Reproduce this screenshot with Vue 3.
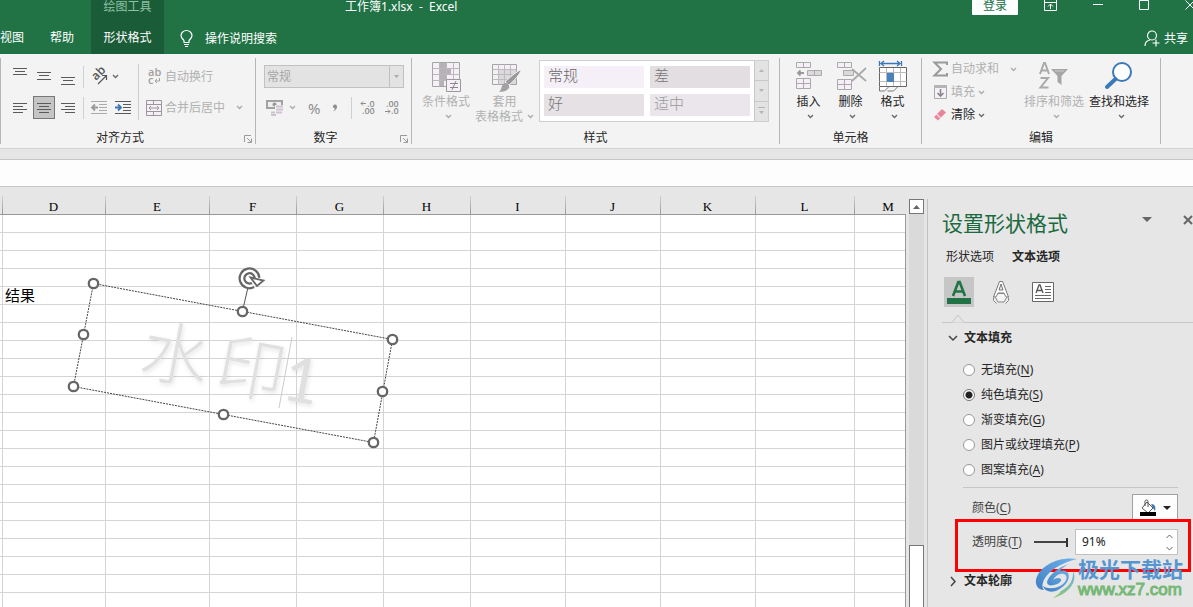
<script setup>
import { ref } from 'vue'

const columns = [
  { name: '', width: 3 },
  { name: 'D', width: 103 },
  { name: 'E', width: 104 },
  { name: 'F', width: 87 },
  { name: 'G', width: 87 },
  { name: 'H', width: 87 },
  { name: 'I', width: 95 },
  { name: 'J', width: 95 },
  { name: 'K', width: 95 },
  { name: 'L', width: 99 },
  { name: 'M', width: 0 }
]
const rowCount = 22
const cells = { '5-D': '结果' }

const fills = [
  { id: 'none', text: '无填充', key: 'N' },
  { id: 'solid', text: '纯色填充', key: 'S' },
  { id: 'gradient', text: '渐变填充', key: 'G' },
  { id: 'picture', text: '图片或纹理填充', key: 'P' },
  { id: 'pattern', text: '图案填充', key: 'A' }
]
const fill = ref('solid')
const transparency = ref('91%')
const level = ref(91)
const handles = [
  [93, 283], [242, 311], [392, 339], [382, 391], [373, 442], [223, 414], [73, 386], [83, 334]
]
</script>

<template>
  <div class="app">
    <header class="topbar">
      <nav class="tabs">
        <a href="#" class="tab view">视图</a>
        <a href="#" class="tab help">帮助</a>
        <div class="context">
          <span class="context-name">绘图工具</span>
          <a href="#" class="tab">形状格式</a>
        </div>
      </nav>
      <div class="top-main">
        <div class="title-row">
          <span class="doc">工作簿1.xlsx&nbsp; -&nbsp; Excel</span>
          <button class="login">登录</button>
          <button class="win" aria-label="功能区显示选项">
            <svg width="13" height="12" viewBox="0 0 13 12"><path d="M.5 0v10.500h12V0M0 2.500h13M6.500 9V4M4 6.500L6.500 4 9 6.500" fill="none" stroke="#fff" /></svg>
          </button>
          <button class="win" aria-label="最小化">
            <svg width="10" height="12" viewBox="0 0 10 12"><path d="M0 4.500h10" stroke="#fff" /></svg>
          </button>
          <button class="win" aria-label="最大化">
            <svg width="10" height="12" viewBox="0 0 10 12"><path d="M.5 .5h9v9h-9z" fill="none" stroke="#fff" /></svg>
          </button>
          <button class="win last" aria-label="关闭">
            <svg width="10" height="12" viewBox="0 0 10 12"><path d="M.5 .5l9 9M9.500 .5l-9 9" stroke="#fff" /></svg>
          </button>
        </div>
        <div class="search-row">
          <button class="search">
            <svg width="13" height="17" viewBox="0 0 13 17"><path d="M4 12.500v-2C3 9 1 8 1 5.500a5.500 5 0 0 1 11 0C12 8 10 9 9 10.500v2zM4 14.500h5M5 16.500h3" fill="none" stroke="#fff" stroke-width="1.200" /></svg>
            <span>操作说明搜索</span>
          </button>
          <button class="share">
            <svg width="16" height="17" viewBox="0 0 16 17"><circle cx="8" cy="5.500" r="4.500" fill="none" stroke="#fff" stroke-width="1.200" /><path d="M1 16c0-3.500 2-5.500 5-6M12 9.500v7M8.500 13h7" fill="none" stroke="#fff" stroke-width="1.200" /></svg>
            <span>共享</span>
          </button>
        </div>
      </div>
    </header>

    <svg class="defs" width="0" height="0" aria-hidden="true">
      <symbol id="chev" viewBox="0 0 7 5"><path d="M1 1l2.500 2.500L6 1" fill="none" stroke="currentColor" stroke-width="1.300" /></symbol>
      <symbol id="launch" viewBox="0 0 8 8"><path d="M.5 7V.5H7M3 3l4 4M7.500 3.500v4h-4" fill="none" stroke="#999" /></symbol>
    </svg>

    <section class="ribbon">
      <div class="group align">
        <div class="body">
          <div class="stack">
            <div class="line">
              <button class="sq" aria-label="顶端对齐"><svg width="14" height="20" viewBox="0 0 14 20"><path d="M0 1.500h14M2 4.500h10M0 7.500h14" stroke="#5a5a5a" /></svg></button>
              <button class="sq" aria-label="垂直居中"><svg width="14" height="20" viewBox="0 0 14 20"><path d="M0 5.500h14M2 8.500h10M0 12.500h14" stroke="#5a5a5a" /></svg></button>
              <button class="sq" aria-label="底端对齐"><svg width="14" height="20" viewBox="0 0 14 20"><path d="M0 10.500h14M2 13.500h10M0 17.500h14" stroke="#5a5a5a" /></svg></button>
              <i class="sep"></i>
              <button class="orient" aria-label="方向">
                <svg width="18" height="17" viewBox="0 0 18 17"><text x="0" y="0" transform="translate(5 13) rotate(-45)" font-family="Open Sans, sans-serif" font-size="12" font-weight="600" fill="#555">ab</text><path d="M7 16l8.500-8.500M11 7.500h4.500V12" fill="none" stroke="#555" stroke-width="1.200" /></svg>
                <svg class="chev"><use href="#chev" /></svg>
              </button>
            </div>
            <div class="line">
              <button class="sq" aria-label="左对齐"><svg width="14" height="12" viewBox="0 0 14 12"><path d="M0 1.500h14M0 4.500h10M0 7.500h14M0 10.500h10" stroke="#5a5a5a" /></svg></button>
              <button class="sq on" aria-label="居中"><svg width="14" height="12" viewBox="0 0 14 12"><path d="M0 1.500h14M2 4.500h10M0 7.500h14M2 10.500h10" stroke="#5a5a5a" /></svg></button>
              <button class="sq" aria-label="右对齐"><svg width="14" height="12" viewBox="0 0 14 12"><path d="M0 1.500h14M4 4.500h10M0 7.500h14M4 10.500h10" stroke="#5a5a5a" /></svg></button>
              <i class="sep"></i>
              <button class="indent" aria-label="减少缩进"><svg width="16" height="13" viewBox="0 0 16 13"><path d="M0 .5h16M8 3.500h8M8 6.500h8M8 9.500h8M0 12.500h16" stroke="#aaa" /><path d="M7 6.500H1M4 3.500l-3 3 3 3" fill="none" stroke="#9a9a9a" stroke-width="1.800" /></svg></button>
              <button class="indent" aria-label="增加缩进"><svg width="16" height="13" viewBox="0 0 16 13"><path d="M0 .5h16M8 3.500h8M8 6.500h8M8 9.500h8M0 12.500h16" stroke="#5a5a5a" /><path d="M0 6.500h6M3 3.500l3 3-3 3" fill="none" stroke="#3a78b5" stroke-width="1.800" /></svg></button>
            </div>
          </div>
          <i class="sep tall"></i>
          <div class="stack">
            <button class="line item off">
              <svg width="16" height="17" viewBox="0 0 16 17"><text x="2" y="8" font-family="Open Sans, sans-serif" font-size="11" font-weight="600" fill="#a0a0a0">ab</text><text x="2" y="16" font-family="Open Sans, sans-serif" font-size="11" font-weight="600" fill="#a0a0a0">c</text><path d="M13.500 10v3H9.500M11 11l-2 2 2 2" fill="none" stroke="#a0a0a0" /></svg>
              <span>自动换行</span>
            </button>
            <button class="line item off">
              <svg width="16" height="16" viewBox="0 0 16 16"><path d="M.5 .5h15v15H.5z" fill="#f6eff8" stroke="#999" /><path d="M.5 4.500h15M.5 11.500h15M7.500 1v3M7.500 12v3" stroke="#999" /><path d="M3 8h10M5 6L3 8l2 2M11 6l2 2-2 2" fill="none" stroke="#999" /></svg>
              <span>合并后居中</span>
              <svg class="chev push"><use href="#chev" /></svg>
            </button>
          </div>
        </div>
        <footer><span>对齐方式</span><svg class="launch"><use href="#launch" /></svg></footer>
      </div>

      <div class="group number">
        <div class="body">
          <div class="stack full">
            <div class="select">
              <select aria-label="数字格式"><option>常规</option></select>
              <svg width="7" height="4" viewBox="0 0 7 4"><path d="M1 0h5L3.500 3z" fill="#aaa" /></svg>
            </div>
            <div class="line off nums">
              <button class="money" aria-label="会计数字格式">
                <svg width="18" height="17" viewBox="0 0 18 17"><path d="M1 2h15v7H1z" fill="#f3eef5" stroke="#a2a2a2" stroke-width="2" /><circle cx="8.500" cy="5.500" r="2" fill="#999" /><path d="M9 6h9v10H9z" fill="#f3f3f3" /><path d="M10 7.500h7M10 10.500h7M10 13.500h6M5 13.500h4M5 16h5" stroke="#cbc4cd" stroke-width="2" /></svg>
                <svg class="chev"><use href="#chev" /></svg>
              </button>
              <button class="pct">%</button>
              <button class="comma" aria-label="千位分隔样式"><svg width="6" height="8" viewBox="0 0 6 8"><path d="M1 2a2 2 0 1 1 4 1C5 5 3 7 1 7.500 2.500 6 3 5 3 4.500 1.500 4.500 1 3.500 1 2z" fill="#8e8e8e" /></svg></button>
              <i class="sep"></i>
              <button class="dec" aria-label="增加小数位数"><svg width="16" height="15" viewBox="0 0 16 15"><g font-family="Open Sans, sans-serif" font-size="9" font-weight="600" fill="#8e8e8e"><text x="7" y="7">.0</text><text x="2" y="14">.00</text></g><path d="M6 3.500H1M3 1.500l-2 2 2 2" fill="none" stroke="#8e8e8e" /></svg></button>
              <button class="dec" aria-label="减少小数位数"><svg width="16" height="15" viewBox="0 0 16 15"><g font-family="Open Sans, sans-serif" font-size="9" font-weight="600" fill="#8e8e8e"><text x="2" y="7">.00</text><text x="7" y="14">.0</text></g><path d="M1 11.500h5M4 9.500l2 2-2 2" fill="none" stroke="#8e8e8e" /></svg></button>
            </div>
          </div>
        </div>
        <footer><span>数字</span><svg class="launch"><use href="#launch" /></svg></footer>
      </div>

      <div class="group styles">
        <div class="body">
          <button class="big off">
            <svg width="32" height="32" viewBox="0 0 32 32"><path d="M2.500 .5h27v24h-27z" fill="#f6eff8" stroke="#a5a5a5" /><path d="M10 1h6v5h5v6h-5v6h-2v6h-4z" fill="#b4b2b5" /><path d="M2.500 6.500h27M2.500 12.500h27M2.500 18.500h27M9.500 .5v24M16.500 .5v24M23.500 .5v24" stroke="#b9b9b9" fill="none" /><path d="M16.500 17.500h14v12h-14z" fill="#f6eff8" stroke="#999" /><path d="M20 21.500h8M20 25.500h8M26 19l-4 9" stroke="#888" fill="none" /></svg>
            <span>条件格式</span>
            <svg class="chev"><use href="#chev" /></svg>
          </button>
          <button class="big off tbl">
            <svg width="32" height="32" viewBox="0 0 32 32"><path d="M3.500 2.500h24v20h-24z" fill="#f6eff8" stroke="#a5a5a5" /><path d="M10 8h17v14H10z" fill="#dcd8de" /><path d="M3.500 7.500h24M3.500 12.500h24M3.500 17.500h24M9.500 2.500v20M15.500 2.500v20M21.500 2.500v20" stroke="#bcbcbc" fill="none" /><path d="M32 8c0 3-8 12-12 15l-4-3C20 16 28 9 32 8z" fill="#999" stroke="#f3f3f3" /><path d="M16 21c3 0 5 2 4 5-2 3-6 4-10 4 3-2 2-8 6-9z" fill="#a2a2a2" /></svg>
            <span>套用</span>
            <span>表格格式 <svg class="chev"><use href="#chev" /></svg></span>
          </button>
          <div class="gallery">
            <div class="swatches">
              <button class="s1">常规</button>
              <button class="s2">差</button>
              <button class="s3">好</button>
              <button class="s4">适中</button>
            </div>
            <div class="scroller">
              <button aria-label="上一行"><svg width="7" height="4" viewBox="0 0 7 4"><path d="M1 3h5L3.500 0z" fill="#b5b5b5" /></svg></button>
              <button aria-label="下一行"><svg width="7" height="4" viewBox="0 0 7 4"><path d="M1 0h5L3.500 3z" fill="#b5b5b5" /></svg></button>
              <button aria-label="其他"><svg width="7" height="8" viewBox="0 0 7 8"><path d="M0 .5h7" stroke="#b5b5b5" /><path d="M1 4h5L3.500 7z" fill="#b5b5b5" /></svg></button>
            </div>
          </div>
        </div>
        <footer><span>样式</span></footer>
      </div>

      <div class="group cellsgrp">
        <div class="body">
          <button class="big">
            <svg width="32" height="32" viewBox="0 0 32 32"><g stroke="#aaa" fill="#f6eff8"><path d="M3.500 .5h14v5h-14zM10.500 .5v5M3.500 16.500h14v10h-14zM10.500 16.500v10M3.500 21.500h14" /><path d="M14.500 8.500h14v5h-14zM21.500 8.500v5" fill="#dcd8de" /></g><path d="M11 11H5M7.500 8.500L5 11l2.500 2.500" fill="none" stroke="#999" stroke-width="1.800" /></svg>
            <span>插入</span>
            <svg class="chev"><use href="#chev" /></svg>
          </button>
          <button class="big">
            <svg width="32" height="32" viewBox="0 0 32 32"><g stroke="#aaa" fill="#f6eff8"><path d="M2.500 .5h14v5h-14zM9.500 .5v5M2.500 17.500h14v10h-14zM9.500 17.500v10M2.500 22.500h14" /><path d="M8.500 8.500h10v5h-10z" fill="#dcd8de" /></g><path d="M17 7l14 12M31 6L17 19" fill="none" stroke="#aaa" stroke-width="1.800" /></svg>
            <span>删除</span>
            <svg class="chev"><use href="#chev" /></svg>
          </button>
          <button class="big">
            <svg width="32" height="32" viewBox="0 0 32 32"><path d="M2.500 -1v5M24.500 -1v5M4 1.500h19M7 -1L4 1.500 7 4M20 -1l3 2.500L20 4" fill="none" stroke="#3a78b5" stroke-width="1.300" /><path d="M2.500 5.500h27v19h-27z" fill="#fff" stroke="#666" /><path d="M2.500 10.500h27M2.500 19.500h27M9.500 6v18M16.500 6v18M23.500 6v18" fill="none" stroke="#bbb" /><path d="M10 11h7v9h-7z" fill="#4a82bb" /><path d="M2.500 25v4h5l4-4M10.500 29h6l4-4" fill="#fff" stroke="#777" /></svg>
            <span>格式</span>
            <svg class="chev"><use href="#chev" /></svg>
          </button>
        </div>
        <footer><span>单元格</span></footer>
      </div>

      <div class="group edit">
        <div class="body">
          <div class="edits">
            <button class="item off"><svg width="15" height="16" viewBox="0 0 15 16"><path d="M14 4V1.500H1.500L8 8l-6.500 6.500H14V12" fill="none" stroke="#999" stroke-width="2" /></svg><span>自动求和</span><svg class="chev push"><use href="#chev" /></svg></button>
            <button class="item off"><svg width="15" height="16" viewBox="0 0 15 16"><path d="M1.500 1.500h12v13h-12z" fill="#f6eff8" stroke="#aaa" /><path d="M1 1h13v3H1z" fill="#b5b5b5" /><path d="M7.500 5v7M4.500 9l3 3 3-3" fill="none" stroke="#888" stroke-width="1.600" /></svg><span>填充</span><svg class="chev"><use href="#chev" /></svg></button>
            <button class="item"><svg width="15" height="16" viewBox="0 0 15 16"><path d="M9 2l4 3.500-8 8L1 10z" fill="#e8849a" /><path d="M3.500 7l4 4" stroke="#f7d5dc" stroke-width="1.500" /></svg><span>清除</span><svg class="chev"><use href="#chev" /></svg></button>
          </div>
          <button class="big off sort">
            <svg width="32" height="32" viewBox="0 0 32 32"><path d="M2 12L6 1h1l4 11M3.500 8.500h6" fill="none" stroke="#aaa" stroke-width="2" /><path d="M2.500 16h7.500L2.500 25.500h8" fill="none" stroke="#aaa" stroke-width="2" /><path d="M13 7h17l-6.500 7v9l-4-3v-6z" fill="#a5a5a5" /><path d="M17 9h9" stroke="#ccc" /></svg>
            <span>排序和筛选</span>
            <svg class="chev"><use href="#chev" /></svg>
          </button>
          <button class="big find">
            <svg width="32" height="32" viewBox="0 0 32 32"><circle cx="19" cy="10" r="9" fill="#fff" stroke="#3a7ab8" stroke-width="2" /><path d="M12.500 17L4 25" stroke="#3a7ab8" stroke-width="4" stroke-linecap="round" /></svg>
            <span>查找和选择</span>
            <svg class="chev"><use href="#chev" /></svg>
          </button>
        </div>
        <footer><span>编辑</span></footer>
      </div>
    </section>

    <div class="formula"><input type="text" aria-label="编辑栏"></div>

    <main class="work">
      <div class="sheet">
        <table>
          <colgroup>
            <col v-for="c in columns" :key="c.name" :style="c.width ? { width: c.width + 'px' } : {}">
          </colgroup>
          <thead>
            <tr><th v-for="c in columns" :key="c.name">{{ c.name }}</th></tr>
          </thead>
          <tbody>
            <tr v-for="r in rowCount" :key="r">
              <td v-for="c in columns" :key="c.name">{{ cells[r + '-' + c.name] }}</td>
            </tr>
          </tbody>
        </table>
        <svg class="shape" width="350" height="200" viewBox="60 260 350 200">
          <defs><filter id="soft" x="-20%" y="-20%" width="140%" height="140%"><feDropShadow dx="1" dy="2" stdDeviation="2" flood-color="#000" flood-opacity=".1" /></filter></defs>
          <g font-family="Noto Sans CJK SC, sans-serif" font-size="68" font-weight="300" fill="#e0e0e0" filter="url(#soft)" text-anchor="middle">
            <text transform="translate(171 379) rotate(10.600)">水</text>
            <text transform="translate(247 393) rotate(10.600)">印</text>
            <text transform="translate(298 402) rotate(10.600)" font-family="Lato, sans-serif" font-size="62" font-weight="400">1</text>
          </g>
          <path d="M292 337l-13 71" stroke="#ccc" />
          <path d="M93.500 283.500l299 56-19 103-300-56z" fill="none" stroke="#444" stroke-dasharray="2 1" />
          <path d="M242.500 311l6-26" stroke="#555" />
          <path d="M253 285a7.500 7.500 0 1 1 4-7" fill="none" stroke="#666" stroke-width="7" />
          <path d="M253 285a7.500 7.500 0 1 1 4-7" fill="none" stroke="#fff" stroke-width="2.500" />
          <path d="M250.500 277.500l13 3-6.500 5.500z" fill="#fff" stroke="#666" stroke-width="1.800" />
          <circle v-for="(h, i) in handles" :key="i" :cx="h[0] + 0.5" :cy="h[1] + 0.5" r="4.700" fill="#fff" stroke="#666" stroke-width="2.300" />
        </svg>
      </div>
      <div class="vscroll">
        <button aria-label="向上滚动"><svg width="7" height="4" viewBox="0 0 7 4"><path d="M0 4h7L3.500 0z" fill="#666" /></svg></button>
        <div class="thumb"></div>
      </div>

      <aside class="panel">
        <div class="panel-head">
          <h1>设置形状格式</h1>
          <button aria-label="窗格选项"><svg width="10" height="6" viewBox="0 0 10 6"><path d="M0 0h10L5 5z" fill="#666" /></svg></button>
          <button aria-label="关闭窗格"><svg width="10" height="10" viewBox="0 0 10 10"><path d="M1 1l8 8M9 1L1 9" stroke="#666" stroke-width="2" /></svg></button>
        </div>
        <div class="panel-tabs">
          <button>形状选项</button>
          <button class="active">文本选项</button>
        </div>
        <div class="modes">
          <button class="on" aria-label="文本填充与轮廓"><svg width="30" height="30" viewBox="0 0 30 30"><path d="M9 19L14.300 5h1.400L21 19M11 14.500h8" fill="none" stroke="#217346" stroke-width="2.600" /><path d="M3 21h24v6H3z" fill="#217346" /></svg></button>
          <button aria-label="文字效果"><svg width="30" height="30" viewBox="0 0 30 30"><path d="M7.500 20L13.500 4.500h3L22.500 20h-3l-1.500-4h-6l-1.500 4zM13 13h4l-2-6z" fill="#fff" stroke="#777" /><path d="M7.500 20.500v3l3 3M22.500 20.500v3l-3 3M12 16.500l-2.500 4 2.500 4.500h6l2.500-4.500-2.500-4z" fill="#f4f4f4" stroke="#888" /></svg></button>
          <button aria-label="文本框"><svg width="30" height="30" viewBox="0 0 30 30"><path d="M4.500 5.500h21v19h-21z" fill="#fff" stroke="#666" /><path d="M8 16l3-8h1l3 8M9 13.500h5" fill="none" stroke="#555" stroke-width="1.300" /><path d="M17 9.500h6M17 12.500h6M17 15.500h6M7 18.500h16M7 21.500h16" stroke="#666" /></svg></button>
        </div>
        <svg class="notch" width="14" height="9" viewBox="0 0 14 9"><path d="M0 8.500h1L7 1l6 7.500h1" fill="#e6e6e6" stroke="#c6c6c6" /></svg>
        <div class="options">
          <h2><svg width="10" height="7" viewBox="0 0 10 7"><path d="M1 1l4 4 4-4" fill="none" stroke="#444" stroke-width="1.500" /></svg>文本填充</h2>
          <div class="radios">
            <label v-for="f in fills" :key="f.id">
              <input v-model="fill" type="radio" name="fill" :value="f.id">
              <span>{{ f.text }}(<u>{{ f.key }}</u>)</span>
            </label>
          </div>
          <div class="row color">
            <span>颜色(<u>C</u>)</span>
            <button class="paint" aria-label="颜色(C)">
              <svg width="20" height="18" viewBox="0 0 20 18"><path d="M8 3l6 6-5 5-6-5zM6 7V2.500a1.500 1.500 0 0 1 3 0V8" fill="#fff" stroke="#555" /><path d="M12 5c4 0 5 3 4 7-1-1-2-3-4-7z" fill="#3a78b5" /><path d="M1 13h16v4H1z" fill="#000" /></svg>
              <svg width="8" height="5" viewBox="0 0 8 5"><path d="M0 0h8L4 4z" fill="#222" /></svg>
            </button>
          </div>
          <div class="row trans">
            <label for="tr">透明度(<u>T</u>)</label>
            <input v-model="level" class="slider" type="range" min="0" max="91" aria-label="透明度滑块">
            <div class="spin">
              <input id="tr" v-model="transparency" type="text">
              <div class="steps">
                <button aria-label="增加"><svg width="7" height="5" viewBox="0 0 7 5"><path d="M.5 4l3-3 3 3" fill="none" stroke="#666" /></svg></button>
                <button aria-label="减少"><svg width="7" height="5" viewBox="0 0 7 5"><path d="M.5 1l3 3 3-3" fill="none" stroke="#666" /></svg></button>
              </div>
            </div>
            <div class="mark"></div>
          </div>
          <h2><svg width="10" height="9" viewBox="0 0 10 9"><path d="M3 0l4 4.500L3 9" fill="none" stroke="#444" stroke-width="1.500" /></svg>文本轮廓</h2>
        </div>
      </aside>
    </main>

    <div class="brand">
      <svg width="42" height="42" viewBox="0 0 42 42">
        <defs>
          <linearGradient id="bl" x1="0" y1="1" x2="1" y2="0"><stop offset="0" stop-color="#3f7fc4" /><stop offset="1" stop-color="#6fb3ea" /></linearGradient>
          <linearGradient id="gr" x1="0" y1="1" x2="1" y2="0"><stop offset="0" stop-color="#8fcb6a" /><stop offset="1" stop-color="#6fb0d8" /></linearGradient>
        </defs>
        <path d="M42 1C25-2 4 7 1 22c-1 6 3 10 8 10C3 24 16 7 42 1z" fill="url(#bl)" />
        <path d="M34 6C23 9 13 18 12 24c0 3 3 4 7 3 5-1 8-4 7-6-2-2-6-1-8 1 2-4 7-7 11-6 5 2 2 9-4 12s-13 3-17 0c2 6 9 7 15 4 8-4 13-12 10-17-2-3-5-3-8-2 2-3 5-5 9-7z" fill="url(#bl)" />
        <path d="M38 13c5 10-4 23-20 27 4-3 7-5 8-7 8-4 13-11 12-20z" fill="url(#gr)" />
      </svg>
      <div><b>极光下载站</b><span>www.xz7.com</span></div>
    </div>
  </div>
</template>

<style>
html, body, #app { height: 100%; }
body { overflow: hidden; }
</style>

<style scoped>
.app {
  position: relative;
  display: flex;
  flex-direction: column;
  height: 100%;
  overflow: hidden;
  background: #e6e6e6;
  color: #262626;
  font: 12px/14px "Noto Sans", "Noto Sans CJK SC", sans-serif;
}
.app * { box-sizing: border-box; }
button, input, select { margin: 0; padding: 0; border: 0; background: none; color: inherit; font: inherit; }
a { color: inherit; text-decoration: none; }
svg { display: block; flex: none; overflow: visible; }
.defs { position: absolute; }

.topbar { display: flex; height: 54px; flex: none; background: #217346; color: #fff; }
.tabs { display: flex; align-items: flex-end; }
.tab { display: block; height: 23px; white-space: nowrap; }
.view { width: 24px; margin-right: 26px; }
.help { margin-right: 17px; }
.context { display: flex; flex-direction: column; justify-content: space-between; align-items: center; align-self: stretch; width: 73px; background: #1b5c38; }
.context-name { color: #8fc0a2; }
.top-main { flex: 1; display: flex; flex-direction: column; justify-content: space-between; }
.title-row { display: flex; align-items: flex-start; height: 15px; margin-right: -2px; }
.doc { margin-left: 181px; margin-right: auto; white-space: nowrap; }
.login { width: 46px; height: 15px; margin-right: 26px; background: #fff; color: #217346; line-height: 11px; padding-bottom: 4px; border-radius: 0 0 1px 1px; }
.win { margin-right: 36px; }
.win.last { margin-right: 0; }
.search-row { display: flex; justify-content: space-between; padding: 0 5px 7px 16px; }
.search, .share { display: flex; align-items: center; gap: 12px; }
.share { gap: 4px; }

.ribbon { display: flex; flex: none; height: 95px; padding-top: 4px; background: #f3f3f3; border-bottom: 1px solid #d2d2d2; }
.group { display: flex; flex-direction: column; height: 86px; border-right: 1px solid #b5b5b5; }
.group .body { display: flex; height: 73px; align-items: flex-start; }
.group footer { position: relative; text-align: center; line-height: 13px; }
.align footer, .number footer { padding-right: 16px; }
.launch { position: absolute; right: 3px; bottom: 1px; width: 8px; height: 8px; }
.align { width: 256px; border-left: 1px solid #b5b5b5; }
.number { width: 156px; }
.styles { width: 368px; }
.cellsgrp { width: 142px; }
.edit { width: 239px; }
.off { color: #b1b1b1; }
.chev { width: 7px; height: 5px; color: #666; }
.off .chev { color: #aaa; }
.stack { display: flex; flex-direction: column; gap: 8px; padding-top: 7px; }
.stack.full { flex: 1; padding-left: 8px; padding-right: 7px; }
.line { display: flex; align-items: center; height: 23px; }
.align .stack:first-child { padding-left: 8px; }
.sq { display: flex; align-items: center; justify-content: center; width: 22px; height: 23px; margin-right: 2px; }
.sq.on { background: #c5c5c5; border: 1px solid #777; }
.sep { width: 1px; height: 22px; background: #d0d0d0; margin: 0 7px 0 2px; }
.sep.tall { height: 56px; margin: 6px 7px 0 7px; }
.orient { display: flex; align-items: center; gap: 3px; }
.indent { margin-right: 8px; }
.indent + .indent { margin-right: 0; }
.item { display: flex; align-items: center; gap: 3px; white-space: nowrap; }
.push { margin-left: 8px; }
.select { display: flex; align-items: center; height: 23px; background: #e3e3e3; border: 1px solid #c1c1c1; padding-right: 3px; }
.select select { flex: 1; height: 21px; margin-right: 3px; padding-left: 2px; appearance: none; color: #a6a6a6; border-right: 1px solid #c1c1c1; }
.nums .sep { margin: 0 8px 0 13px; }
.money { display: flex; align-items: center; gap: 5px; margin: 0 12px 0 2px; }
.pct { font-size: 15px; color: #8e8e8e; margin-right: 12px; }
.dec + .dec { margin-left: 8px; }

.big { display: flex; flex-direction: column; align-items: center; padding-top: 4px; white-space: nowrap; line-height: 15px; }
.big > .chev { margin: 5px 0 0 4px; }
.big span { display: flex; align-items: center; gap: 4px; }
.styles .body { padding-left: 10px; }
.tbl { margin-left: 5px; }
.gallery { display: flex; flex: 1; height: 62px; margin: 2px 10px 0 5px; border: 1px solid #cfcfcf; background: #fff; }
.swatches { flex: 1; display: grid; grid-template-columns: 1fr 1fr; grid-template-rows: 22px 22px; gap: 6px; padding: 5px 4px; }
.swatches button { text-align: left; padding: 0 0 4px 4px; font-size: 15px; font-weight: 300; line-height: 18px; }
.s1 { background: #f5f0f7; color: #666; }
.s2 { background: #e3dee2; color: #777; }
.s3 { background: #e5e1e5; color: #777; }
.s4 { background: #eae6ec; color: #999; }
.scroller { display: flex; flex-direction: column; width: 14px; background: #e3e3e3; border-left: 1px solid #c8c8c8; }
.scroller button { flex: 1; display: flex; align-items: center; justify-content: center; }
.scroller button + button { border-top: 1px solid #c8c8c8; }
.cellsgrp .body { justify-content: center; gap: 10px; }
.edit .body { padding-left: 11px; }
.edits { width: 88px; display: flex; flex-direction: column; gap: 7px; padding-top: 3px; }
.sort { margin-left: 3px; }
.find { margin-left: 5px; }

.formula { flex: none; height: 28px; margin-top: 10px; background: #fdfdfd; border: solid #c6c6c6; border-width: 1px 0; }
.formula input { width: 100%; height: 26px; }

.work { flex: 1; min-height: 0; display: flex; }
.sheet { position: relative; flex: 1; overflow: hidden; }
.sheet::after { content: ""; position: absolute; top: 27px; right: 0; bottom: 0; width: 1px; background: #999; }
table { width: calc(100% + 17px); table-layout: fixed; border-collapse: separate; border-spacing: 0; }
th { height: 28px; padding: 13px 2px 0 0; border-bottom: 1px solid #999; background: linear-gradient(#d0d0d0, #999) right bottom / 1px 18px no-repeat; font: 13px/14px "Liberation Serif", serif; color: #000; }
td { height: 18px; padding: 0 2px; border: solid #d4d4d4; border-width: 0 1px 1px 0; background: #fff; font-size: 15px; line-height: 17px; color: #000; white-space: nowrap; overflow: hidden; }
.shape { position: absolute; left: 60px; top: 73px; }

.vscroll { display: flex; flex-direction: column; justify-content: space-between; width: 15px; margin: 12px 3px 0; background: #dadada; }
.vscroll button { display: flex; align-items: center; justify-content: center; width: 15px; height: 15px; background: #fff; border: 1px solid #777; }
.thumb { height: 62px; background: #fff; border: 1px solid #777; border-bottom: 0; }

.panel { width: 266px; margin-top: 12px; border-left: 1px solid #c1c1c1; padding-left: 14px; }
.panel-head { display: flex; align-items: center; height: 42px; padding-top: 6px; }
h1 { margin: 0; flex: 1; color: #1b6a3f; font-size: 21px; line-height: 28px; font-weight: 400; white-space: nowrap; }
.panel-head button + button { margin-left: 31px; }
.panel-head button { padding-bottom: 6px; }
.panel-tabs { display: flex; gap: 18px; height: 36px; padding: 9px 0 0 4px; align-items: flex-start; }
.active { font-weight: 700; }
.modes { display: flex; gap: 12px; padding-left: 2px; }
.modes .on { background: #c6c6c6; }
.notch { position: relative; z-index: 1; margin: 7px 0 -1px 9px; }
.options { border-top: 1px solid #c6c6c6; }
h2 { display: flex; align-items: center; gap: 6px; margin: 0; padding-left: 6px; height: 30px; font-size: 12px; font-weight: 700; }
.radios { display: flex; flex-direction: column; margin: 4px 15px 0 21px; height: 131px; border-bottom: 1px solid #c6c6c6; }
.radios label { display: flex; align-items: center; gap: 6px; height: 25px; }
.radios input { appearance: none; width: 12px; height: 12px; border: 1px solid #999; border-radius: 50%; background: #fff; }
.radios input:checked { border-color: #777; background: radial-gradient(circle, #222 0 3px, #fff 4px); }
u { text-underline-offset: 2px; }
.row { position: relative; display: flex; align-items: center; margin-right: 15px; padding-left: 30px; color: #444; }
.color { justify-content: space-between; height: 40px; }
.paint { display: flex; align-items: center; justify-content: center; gap: 4px; width: 46px; height: 28px; background: #fdfdfd; border: 1px solid #a0a0a0; }
.trans { height: 28px; }
.slider { appearance: none; width: 34px; height: 10px; margin: 0 7px 0 auto; background: linear-gradient(#444, #444) center / 100% 2px no-repeat; }
.slider::-webkit-slider-thumb { appearance: none; width: 2px; height: 9px; background: #333; }
.spin { display: flex; width: 103px; height: 26px; background: #fff; border: 1px solid #c1c1c1; }
.spin input { flex: 1; min-width: 0; padding-left: 6px; color: #222; }
.steps { display: flex; flex-direction: column; width: 16px; }
.steps button { flex: 1; display: flex; align-items: center; justify-content: center; }
.mark { position: absolute; left: 13px; right: -13px; top: -9px; height: 53px; border: 3px solid #f00; }
.trans + h2 { margin-top: 10px; }

.brand { position: absolute; right: 10px; bottom: 7px; display: flex; align-items: flex-end; gap: 1px; pointer-events: none; }
.brand div { display: flex; flex-direction: column; }
.brand b { color: #5596d2; font-size: 21px; line-height: 22px; font-weight: 700; }
.brand span { color: #76b878; font: 17px/20px "Liberation Sans", sans-serif; -webkit-text-stroke: 1px #76b878; }
</style>
